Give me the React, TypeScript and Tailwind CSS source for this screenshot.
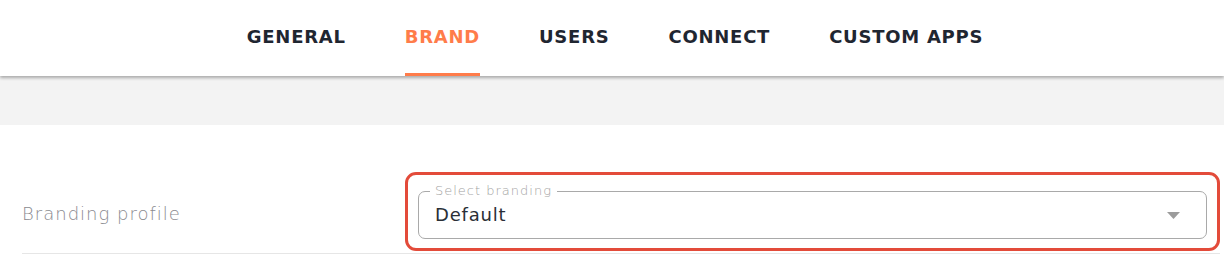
import React from 'react';

const tabs = ['GENERAL', 'BRAND', 'USERS', 'CONNECT', 'CUSTOM APPS'];

const App: React.FC = () => {
  const active = 'BRAND';

  return (
    <div className="w-[1224px] h-[255px] bg-white overflow-hidden font-['DejaVu_Sans',sans-serif]">
      {/* Tabs */}
      <div className="relative z-10 h-[76px] bg-white shadow-[0_2px_3px_rgba(0,0,0,0.3)] flex justify-center items-stretch gap-[59px] pl-[6px]">
        {tabs.map((t) => (
          <div
            key={t}
            className={`flex items-center border-b-[3px] text-[18px] tracking-[0.75px] font-semibold ${
              t === active ? 'text-[#ff7c4a] border-[#ff7c4a]' : 'text-[#1f2631] border-transparent'
            }`}
          >
            {t}
          </div>
        ))}
      </div>

      {/* Grey band */}
      <div className="h-[49px] bg-[#f3f3f3]" />

      {/* Setting row */}
      <div className="pl-[22px] pr-[4px] pt-[46px]">
        <div className="flex items-center border-b border-[#e6e6e6] h-[83px]">
          <div className="w-[383px] text-[18px] tracking-[1px] font-light text-[#8a8a8f] pt-[2px]">Branding profile</div>
          <div className="flex-1 border-[3px] border-[#e34b3a] rounded-[11px] px-[10px] pt-[16px] pb-[9px] -mt-[2px]">
            <div className="relative h-[48px] border border-[#a9a9a9] rounded-[7px] flex items-center pl-[16px] pr-[26px]">
              <span className="absolute -top-[9px] left-[11px] bg-white px-[5px] text-[13px] tracking-[1px] font-light text-[#a4a4a4] leading-[16px]">
                Select branding
              </span>
              <span className="flex-1 text-[18px] tracking-[0.8px] text-[#2a2f36]">Default</span>
              <svg width="13" height="7" viewBox="0 0 13 7" className="mt-[1px]">
                <path d="M0 0 H13 L6.5 7 Z" fill="#9c9c9c" />
              </svg>
            </div>
          </div>
        </div>
      </div>
    </div>
  );
};

export default App;
